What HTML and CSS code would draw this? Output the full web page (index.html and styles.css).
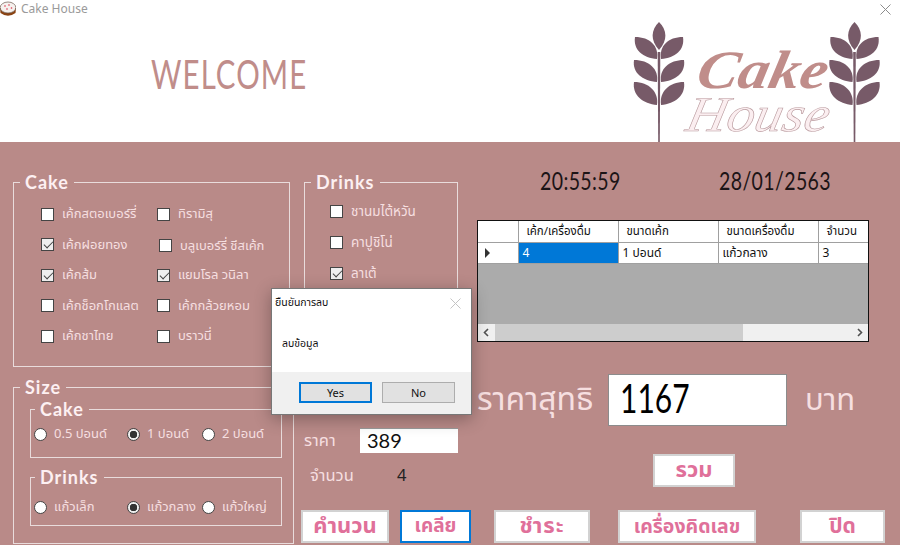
FILE: index.html
```html
<!DOCTYPE html>
<html lang="en">
  <head>
    <meta charset="UTF-8" />
    <meta name="viewport" content="width=device-width, initial-scale=1.0" />
    <title>Cake House</title>
    <link rel="stylesheet" href="styles.css">
  </head>
  <body>
    <div class="window">
      <div class="titlebar">
        <svg class="app-icon" viewBox="0 0 16 16" width="16" height="16">
          <path d="M0 7 L16 7 L15.500 12 Q8 17.500 0.500 12 Z" fill="#8a4312" />
          <ellipse cx="8" cy="6.500" rx="7.800" ry="5.500" fill="#f6f1ee" stroke="#6b5a50" stroke-width="0.700" />
          <circle cx="5" cy="5" r="0.800" fill="#d8344a" />
          <circle cx="9" cy="4" r="0.800" fill="#d8344a" />
          <circle cx="11.500" cy="7" r="0.800" fill="#d8344a" />
          <circle cx="7" cy="8" r="0.800" fill="#d8344a" />
        </svg>
        <span class="app-name">Cake House</span>
        <svg class="close-icon" viewBox="0 0 11 11" width="11" height="11">
          <path d="M0.500 0.500 L10.500 10.500 M10.500 0.500 L0.500 10.500" stroke="#8c8c8c" fill="none" />
        </svg>
      </div>

      <header class="banner">
        <h1 class="welcome">WELCOME</h1>
        <svg class="logo" viewBox="632 18 250 124" width="250" height="124">
          <defs>
            <g id="wheat" fill="#775a68">
              <path d="M-0.800 142 L-1.300 52 L1.300 52 L0.800 142 Z" />
              <path d="M0 50 C-9 40 -8 30 0 22 C8 30 9 40 0 50 Z" />
              <path d="M2 59 C0 46 9 37 24 37 C26 50 16 58 2 59 Z" />
              <path d="M-2 59 C0 46 -9 37 -24 37 C-26 50 -16 58 -2 59 Z" />
              <path d="M2 82 C0 69 10 60 25 60 C27 73 16 81 2 82 Z" />
              <path d="M-2 82 C0 69 -10 60 -25 60 C-27 73 -16 81 -2 82 Z" />
              <path d="M2 105 C0 92 10 82 25 82 C27 95 16 104 2 105 Z" />
              <path d="M-2 105 C0 92 -10 82 -25 82 C-27 95 -16 104 -2 105 Z" />
            </g>
          </defs>
          <use href="#wheat" x="659" y="0" />
          <use href="#wheat" x="854.500" y="0" />
          <text class="logo-cake" x="692" y="88" textLength="130" lengthAdjust="spacingAndGlyphs">Cake</text>
          <text class="logo-house" x="682" y="131" textLength="142" lengthAdjust="spacingAndGlyphs">House</text>
        </svg>
      </header>

      <main class="panel">
        <div class="left-col">
          <fieldset class="group cake-group">
            <legend>Cake</legend>
            <div class="cake-grid">
              <label class="item"><input type="checkbox" />เค้กสตอเบอร์รี่</label>
              <label class="item"><input type="checkbox" />ทิรามิสุ</label>
              <label class="item"><input type="checkbox" checked />เค้กฝอยทอง</label>
              <label class="item nudge"><input type="checkbox" />บลูเบอร์รี่ ชีสเค้ก</label>
              <label class="item"><input type="checkbox" checked />เค้กส้ม</label>
              <label class="item"><input type="checkbox" checked />แยมโรล วนิลา</label>
              <label class="item"><input type="checkbox" />เค้กช็อกโกแลต</label>
              <label class="item"><input type="checkbox" />เค้กกล้วยหอม</label>
              <label class="item"><input type="checkbox" />เค้กชาไทย</label>
              <label class="item"><input type="checkbox" />บราวนี่</label>
            </div>
          </fieldset>

          <fieldset class="group size-group">
            <legend>Size</legend>
            <div class="size-inner">
              <fieldset class="group sub-group">
                <legend>Cake</legend>
                <div class="radio-row">
                  <label class="item"><input type="radio" name="cakesize" />0.5 ปอนด์</label>
                  <label class="item"><input type="radio" name="cakesize" checked />1 ปอนด์</label>
                  <label class="item"><input type="radio" name="cakesize" />2 ปอนด์</label>
                </div>
              </fieldset>
              <fieldset class="group sub-group">
                <legend>Drinks</legend>
                <div class="radio-row drinks-row">
                  <label class="item"><input type="radio" name="drinksize" />แก้วเล็ก</label>
                  <label class="item"><input type="radio" name="drinksize" checked />แก้วกลาง</label>
                  <label class="item"><input type="radio" name="drinksize" />แก้วใหญ่</label>
                </div>
              </fieldset>
            </div>
          </fieldset>
        </div>

        <div class="right-col">
          <div class="upper">
            <fieldset class="group drinks-group">
              <legend>Drinks</legend>
              <div class="drinks-list">
                <label class="item"><input type="checkbox" />ชานมไต้หวัน</label>
                <label class="item"><input type="checkbox" />คาปูชิโน่</label>
                <label class="item"><input type="checkbox" checked />ลาเต้</label>
              </div>
            </fieldset>

            <div class="info">
              <div class="clock">
                <span class="squeeze">20:55:59</span>
                <span class="squeeze">28/01/2563</span>
              </div>
              <div class="grid-view">
                <table>
                  <tr class="head">
                    <th class="row-head"></th>
                    <th>เค้ก/เครื่องดื่ม</th>
                    <th>ขนาดเค้ก</th>
                    <th>ขนาดเครื่องดื่ม</th>
                    <th>จำนวน</th>
                  </tr>
                  <tr>
                    <td class="row-head"><span class="row-arrow"></span></td>
                    <td class="selected">4</td>
                    <td>1 ปอนด์</td>
                    <td>แก้วกลาง</td>
                    <td>3</td>
                  </tr>
                </table>
                <div class="empty-area"></div>
                <div class="scrollbar">
                  <svg class="scroll-arrow" viewBox="0 0 17 17" width="17" height="17"><path d="M10 5 L6.500 8.500 L10 12" fill="none" stroke="#505050" stroke-width="1.600" /></svg>
                  <div class="scroll-track"><div class="scroll-thumb"></div></div>
                  <svg class="scroll-arrow" viewBox="0 0 17 17" width="17" height="17"><path d="M7 5 L10.500 8.500 L7 12" fill="none" stroke="#505050" stroke-width="1.600" /></svg>
                </div>
              </div>
            </div>
          </div>

          <div class="lower">
            <div class="price-col">
              <div class="price-row">
                <span class="price-label">ราคา</span>
                <input class="price-input" type="text" value="389" />
              </div>
              <div class="count-row">
                <span class="count-label">จำนวน</span>
                <span class="count-value">4</span>
              </div>
            </div>
            <div class="total-col">
              <div class="total-row">
                <span class="total-label">ราคาสุทธิ</span>
                <div class="total-box"><span class="squeeze">1167</span></div>
                <span class="total-label baht">บาท</span>
              </div>
              <button class="action sum">รวม</button>
            </div>
          </div>

          <div class="actions">
            <button class="action calc">คำนวน</button>
            <button class="action clear">เคลีย</button>
            <button class="action pay">ชำระ</button>
            <button class="action calculator">เครื่องคิดเลข</button>
            <button class="action quit">ปิด</button>
          </div>
        </div>
      </main>

      <div class="dialog">
        <div class="dialog-title">
          <span>ยืนยันการลบ</span>
          <svg viewBox="0 0 11 11" width="11" height="11">
            <path d="M0.500 0.500 L10.500 10.500 M10.500 0.500 L0.500 10.500" stroke="#c4c4c4" fill="none" />
          </svg>
        </div>
        <div class="dialog-text">ลบข้อมูล</div>
        <div class="dialog-foot">
          <button class="dialog-btn default">Yes</button>
          <button class="dialog-btn">No</button>
        </div>
      </div>
    </div>
  </body>
</html>
```

FILE: styles.css
```css
* {
  box-sizing: border-box;
}
body {
  margin: 0;
  font-family: "Noto Sans Thai", "Noto Sans", "DejaVu Sans", sans-serif;
}
.window {
  position: relative;
  width: 900px;
  height: 545px;
  overflow: hidden;
  background-color: white;
}
/* no condensed font installed, so the narrow hand lettering is squeezed */
.squeeze {
  display: inline-block;
  transform: scaleX(0.78);
  transform-origin: left center;
  white-space: nowrap;
}

/* title bar and banner */
.titlebar {
  display: flex;
  align-items: center;
  height: 18px;
}
.app-name {
  margin-left: 5px;
  font-size: 12px;
  color: #9a9a9a;
}
.close-icon {
  margin-left: auto;
  margin-right: 9px;
}
.banner {
  display: flex;
  align-items: center;
  height: 124px;
  padding-left: 151px;
}
.welcome {
  margin: -12px 0 0;
  font-family: Lato, sans-serif;
  font-size: 40px;
  font-weight: 400;
  letter-spacing: 1.500px;
  color: #c08d8a;
  transform: scaleX(0.735);
  transform-origin: left center;
}
.logo {
  margin-left: auto;
  margin-right: 18px;
}
.logo-cake {
  font-family: "Liberation Serif", serif;
  font-style: italic;
  font-weight: bold;
  font-size: 54px;
  fill: #c08d8a;
  transform-box: fill-box;
  transform-origin: left bottom;
  transform: skewX(-12deg);
}
.logo-house {
  font-family: "Liberation Serif", serif;
  font-style: italic;
  font-size: 50px;
  fill: #fbeef0;
  stroke: #b99a9e;
  stroke-width: 0.6;
  transform-box: fill-box;
  transform-origin: left bottom;
  transform: skewX(-12deg);
}

/* main panel */
.panel {
  display: flex;
  gap: 10px;
  height: 403px;
  padding: 26px 0 0 13px;
  background-color: #b98a88;
}
.left-col {
  display: flex;
  flex-direction: column;
  gap: 10px;
  width: 281px;
  margin-top: 4px;
}
.group {
  min-width: 0;
  margin: 0;
  padding: 0;
  border: 1px solid #e9dcdc;
}
.group legend {
  margin-left: 6px;
  padding: 0 5px;
  font-family: Lato, sans-serif;
  font-size: 18px;
  font-weight: 700;
  line-height: 20px;
  letter-spacing: 1px;
  color: #fdf0f2;
}
.item {
  display: flex;
  align-items: center;
  gap: 7px;
  font-size: 13px;
  color: #f6dfe0;
  white-space: nowrap;
}
.item input {
  flex: none;
  appearance: none;
  width: 13px;
  height: 13px;
  margin: 0;
  background-color: white;
  border: 1px solid #444;
}
.item input[type="checkbox"] {
  margin-right: 1px;
}
.item input[type="checkbox"]:checked {
  background-color: #eeeeee;
}
.item input[type="checkbox"]:checked::after {
  content: "";
  display: block;
  width: 8px;
  height: 4px;
  margin: 2px 0 0 1.500px;
  border-left: 1.500px solid #444;
  border-bottom: 1.500px solid #444;
  transform: rotate(-45deg);
}
.item input[type="radio"] {
  border-radius: 50%;
}
.item input[type="radio"]:checked {
  background: radial-gradient(circle, #333 0 3.500px, #eeeeee 4px);
}

.cake-group {
  width: 277px;
  height: 195px;
}
.cake-grid {
  display: grid;
  grid-template-columns: 116px 1fr;
  grid-auto-rows: 30.500px;
  padding: 7px 0 0 27px;
}
.nudge {
  padding: 2px 0 0 2px;
}
.size-group {
  width: 281px;
  height: 167px;
}
.size-inner {
  padding: 2px 11px 0 16px;
}
.sub-group {
  height: 59px;
  margin-bottom: 9px;
}
.sub-group legend {
  margin-left: 4px;
}
.radio-row {
  display: grid;
  grid-template-columns: 93px 75px 1fr;
  height: 30px;
  padding-left: 3px;
}
.drinks-row {
  margin-top: 5px;
}

/* right side */
.upper {
  display: flex;
  height: 199px;
}
.drinks-group {
  width: 154px;
  height: 195px;
  margin-top: 4px;
}
.drinks-list {
  display: grid;
  grid-auto-rows: 31px;
  padding: 4px 0 0 25px;
}
.drinks-list .item {
  font-size: 13.500px;
}
.info {
  width: 392px;
  margin-left: 19px;
}
.clock {
  display: grid;
  grid-template-columns: 179px 1fr;
  height: 24px;
  padding-left: 63px;
  margin-bottom: 28px;
  font-family: Lato, sans-serif;
  font-size: 25px;
  line-height: 24px;
  letter-spacing: 0.500px;
  color: #1c1416;
}
.grid-view {
  display: flex;
  flex-direction: column;
  height: 122px;
  background-color: #ababab;
  border: 1px solid #111;
}
.grid-view table {
  width: 390px;
  border-collapse: collapse;
  table-layout: fixed;
  color: #111;
}
.grid-view th,
.grid-view td {
  width: 100px;
  padding: 0 0 0 4px;
  background-color: white;
  border-right: 1px solid #a0a0a0;
  border-bottom: 1px solid #a0a0a0;
  text-align: left;
  font-weight: 400;
  white-space: nowrap;
  overflow: hidden;
}
.grid-view .head th {
  height: 21px;
  padding-left: 8px;
  font-size: 11.500px;
}
.grid-view td {
  height: 21px;
  font-size: 12px;
}
.grid-view th:last-child,
.grid-view td:last-child {
  width: 50px;
  border-right: none;
}
.grid-view .row-head {
  width: 40px;
}
.grid-view .selected {
  background-color: #0078d7;
  color: white;
}
.row-arrow {
  display: block;
  width: 0;
  height: 0;
  margin-left: 3px;
  border-left: 5px solid #333;
  border-top: 5px solid transparent;
  border-bottom: 5px solid transparent;
}
.empty-area {
  flex: 1;
}
.scrollbar {
  display: flex;
  height: 17px;
  background-color: #f0f0f0;
}
.scroll-track {
  flex: 1;
}
.scroll-thumb {
  width: 248px;
  height: 17px;
  background-color: #cdcdcd;
}

.lower {
  display: flex;
  height: 136px;
  margin-top: 7px;
}
.price-col {
  width: 154px;
  padding-top: 54px;
  font-size: 16.500px;
  color: #f6dfe0;
}
.price-row {
  display: flex;
  align-items: center;
  justify-content: space-between;
}
.price-input {
  width: 98px;
  height: 25px;
  padding: 0 7px 2px;
  border: none;
  border-top: 1px solid #999;
  font-family: Lato, sans-serif;
  font-size: 20px;
  color: #111;
}
.count-row {
  display: flex;
  align-items: center;
  height: 20px;
  margin-top: 12px;
  padding-left: 6px;
}
.count-label {
  width: 87px;
}
.count-value {
  color: #222;
}
.total-col {
  margin-left: 19px;
}
.total-row {
  display: flex;
  align-items: center;
}
.total-label {
  width: 131px;
  font-size: 32px;
  color: #f6dfe0;
  white-space: nowrap;
}
.total-box {
  width: 179px;
  height: 52px;
  padding-left: 11px;
  background-color: white;
  border: 1px solid #8c8c8c;
  font-family: Lato, sans-serif;
  font-size: 40px;
  line-height: 46px;
  color: #000;
}
.total-box .squeeze {
  transform: scaleX(0.75);
}
.baht {
  width: auto;
  margin-left: 18px;
  font-size: 31px;
}

.action {
  height: 33px;
  padding: 0;
  background-color: white;
  border: 2px solid #d2d2d2;
  font-family: inherit;
  font-size: 19.500px;
  font-weight: 700;
  line-height: 26px;
  color: #e0709a;
}
.sum {
  display: block;
  width: 82px;
  margin: 28px 0 0 176px;
  font-size: 22px;
}
.actions {
  display: flex;
  margin-left: -3px;
}
.calc {
  width: 88px;
  font-size: 22px;
}
.clear {
  width: 71px;
  margin-left: 11px;
  border-color: #0078d7;
  font-size: 19px;
}
.pay {
  width: 96px;
  margin-left: 23px;
  font-size: 22px;
  letter-spacing: 1px;
}
.calculator {
  width: 138px;
  margin-left: 28px;
}
.quit {
  width: 85px;
  margin-left: 44px;
  font-size: 21px;
}

/* message box */
.dialog {
  position: absolute;
  left: 271px;
  top: 288px;
  display: flex;
  flex-direction: column;
  width: 201px;
  height: 127px;
  background-color: white;
  border: 1px solid #777;
  box-shadow: 0 4px 16px rgba(0, 0, 0, 0.3);
  color: #111;
  font-size: 10.500px;
}
.dialog-title {
  display: flex;
  align-items: center;
  justify-content: space-between;
  height: 24px;
  margin-top: 2px;
  padding: 0 10px 0 3px;
}
.dialog-text {
  flex: 1;
  padding: 21px 0 0 10px;
}
.dialog-foot {
  display: flex;
  gap: 10px;
  height: 42px;
  padding: 10px 0 0 27px;
  background-color: #f0f0f0;
}
.dialog-btn {
  width: 73px;
  height: 21px;
  padding: 0;
  background-color: #e1e1e1;
  border: 1px solid #adadad;
  font-family: "Noto Sans", sans-serif;
  font-size: 11px;
  color: #111;
}
.default {
  border: 2px solid #0078d7;
}
```
